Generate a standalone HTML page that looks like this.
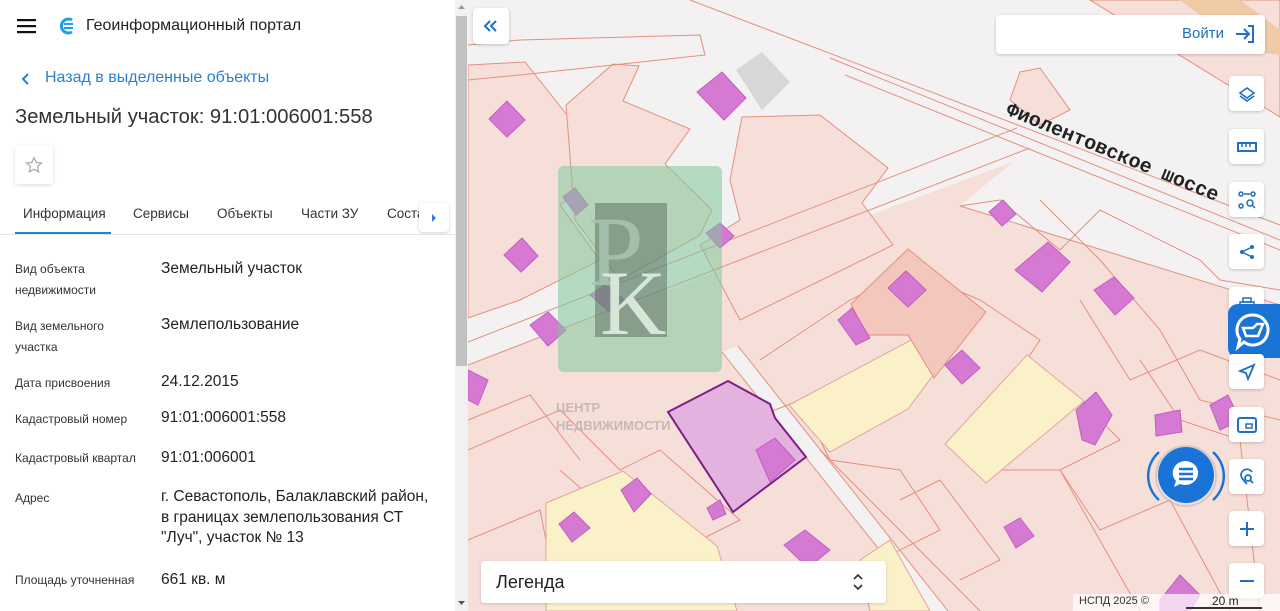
<!DOCTYPE html>
<html><head><meta charset="utf-8">
<style>
*{box-sizing:border-box;margin:0;padding:0}
body{width:1280px;height:611px;overflow:hidden;font-family:"Liberation Sans","DejaVu Sans",sans-serif;background:#fff;position:relative}
#left{position:absolute;left:0;top:0;width:455px;height:611px;background:#fff;color:#222}
#sb{position:absolute;left:455px;top:0;width:13px;height:611px;background:#f1f1f1}
#sb .th{position:absolute;left:1px;top:16px;width:11px;height:350px;background:#c1c1c1}
.lbl{position:absolute;left:15px;font-size:12px;color:#333;line-height:21px}
.val{position:absolute;left:161px;font-size:15.5px;color:#222;line-height:20.5px}
#map{position:absolute;left:468px;top:0;width:812px;height:611px;overflow:hidden;background:#f7dfd9}
.btn{position:absolute;left:1229px;width:35px;height:35px;background:#fff;border-radius:4px;box-shadow:0 1px 3px rgba(0,0,0,.2);display:flex;align-items:center;justify-content:center}
</style></head><body>
<div id="left">
  <svg style="position:absolute;left:17px;top:19px" width="19" height="15"><rect y="0" width="19" height="2.2" fill="#111"/><rect y="6" width="19" height="2.2" fill="#111"/><rect y="12" width="19" height="2.2" fill="#111"/></svg>
  <svg style="position:absolute;left:58px;top:17px" width="18" height="18" viewBox="0 0 18 18"><path d="M14 3A7 7 0 1 0 14 15" fill="none" stroke="#1ea0e8" stroke-width="3"/><rect x="6" y="6" width="9" height="2" fill="#1ea0e8"/><rect x="6" y="10" width="9" height="2" fill="#1ea0e8"/></svg>
  <div style="position:absolute;left:86px;top:17px;font-size:16px;color:#222">Геоинформационный портал</div>
  <svg style="position:absolute;left:21px;top:73px" width="10" height="12"><path d="M7 1L2 6l5 5" fill="none" stroke="#2a7fd0" stroke-width="2"/></svg>
  <div style="position:absolute;left:45px;top:69px;font-size:16px;color:#2a7fd0">Назад в выделенные объекты</div>
  <div style="position:absolute;left:15px;top:106px;font-size:20.2px;color:#333">Земельный участок: 91:01:006001:558</div>
  <div style="position:absolute;left:15px;top:146px;width:38px;height:38px;box-shadow:0 1px 4px rgba(0,0,0,.15);border-radius:3px"><svg style="margin:9px" width="20" height="20" viewBox="0 0 24 24"><path d="M12 3l2.7 6 6.3.6-4.8 4.3 1.4 6.3L12 17l-5.6 3.2 1.4-6.3L3 9.6 9.3 9z" fill="none" stroke="#aaa" stroke-width="1.5"/></svg></div>
  <div style="position:absolute;top:206px;font-size:13.5px;color:#333;left:23px">Информация</div>
  <div style="position:absolute;top:206px;font-size:13.5px;color:#333;left:133px">Сервисы</div>
  <div style="position:absolute;top:206px;font-size:13.5px;color:#333;left:217px">Объекты</div>
  <div style="position:absolute;top:206px;font-size:13.5px;color:#333;left:301px">Части ЗУ</div>
  <div style="position:absolute;top:206px;font-size:13.5px;color:#333;left:387px">Соста</div>
  <div style="position:absolute;left:419px;top:203px;width:30px;height:29px;background:#fff;border-radius:4px;box-shadow:0 1px 3px rgba(0,0,0,.2)"><svg style="position:absolute;left:11px;top:10px" width="8" height="10"><path d="M2 1l4 4-4 4z" fill="#2a7fd0"/></svg></div>
  <div style="position:absolute;left:15px;top:232px;width:96px;height:3px;background:#2a7fd0"></div>
  <div style="position:absolute;left:0;top:234px;width:455px;height:1px;background:#e4e4e4"></div>
  <div class="lbl" style="top:259px">Вид объекта<br>недвижимости</div><div class="val" style="top:259px">Земельный участок</div>
  <div class="lbl" style="top:316px">Вид земельного<br>участка</div><div class="val" style="top:315px">Землепользование</div>
  <div class="lbl" style="top:373px">Дата присвоения</div><div class="val" style="top:372px">24.12.2015</div>
  <div class="lbl" style="top:409px">Кадастровый номер</div><div class="val" style="top:408px">91:01:006001:558</div>
  <div class="lbl" style="top:448px">Кадастровый квартал</div><div class="val" style="top:448px">91:01:006001</div>
  <div class="lbl" style="top:488px">Адрес</div><div class="val" style="top:487px">г. Севастополь, Балаклавский район,<br>в границах землепользования СТ<br>"Луч", участок № 13</div>
  <div class="lbl" style="top:570px">Площадь уточненная</div><div class="val" style="top:570px">661 кв. м</div>
</div>
<div id="sb"><div class="th"></div><svg style="position:absolute;left:2px;top:4px" width="9" height="6"><path d="M1 5l3.5-4 3.5 4z" fill="#999"/></svg><svg style="position:absolute;left:2px;top:600px" width="9" height="6"><path d="M1 1l3.5 4 3.5-4z" fill="#555"/></svg></div>
<div id="map">
<svg width="812" height="611" viewBox="468 0 812 611" style="position:absolute;left:0;top:0">
 <!-- light road areas -->
 <g fill="#f3f1f1">
  <polygon points="468,0 700,0 840,58 1040,135 1045,150 468,365"/>
  <polygon points="690,0 1090,0 1280,117 1280,305 960,206 1040,140 830,60"/>
  <polygon points="722,352 738,346 948,611 928,611"/>
 </g>
 <!-- pink parcels over light area -->
 <g fill="#f7dfd9" stroke="#e2907f" stroke-width="1">
  <polygon points="468,65 525,62 575,125 610,170 560,205 600,260 520,300 468,318"/>
  <polygon points="566,105 613,64 639,66 623,101 690,129 665,164 712,210 700,235 620,280 575,220"/>
  <polygon points="742,117 820,115 888,168 862,203 893,245 740,320 700,245 740,220 730,180"/>
  <polygon points="1090,0 1280,0 1280,117"/>
  <polygon points="1020,72 1040,68 1070,110 1040,125 1010,100"/>
 </g>
 <polygon points="1180,0 1240,0 1280,30 1280,55 1245,50" fill="#f0c9a5"/>
 <g fill="none" stroke="#e2907f" stroke-width="1">
  <line x1="690" y1="0" x2="1280" y2="225"/>
  <line x1="830" y1="58" x2="1280" y2="240"/>
  <line x1="845" y1="75" x2="1280" y2="250"/>
  <line x1="960" y1="206" x2="1280" y2="305"/>
  <line x1="468" y1="342" x2="1017" y2="128"/>
  <line x1="468" y1="365" x2="1030" y2="148"/>
  <line x1="722" y1="352" x2="928" y2="611"/>
  <line x1="738" y1="346" x2="948" y2="611"/>
  <polyline points="468,45 520,40 700,35 705,55 520,75 468,80"/>
  <polyline points="468,450 560,410 620,470 660,450 740,520 660,560 620,611"/>
  <polyline points="750,420 800,400 830,460 900,470 940,530 860,570 870,611"/>
  <polyline points="760,360 850,300 910,270 980,300 1040,340 1000,400 1030,420 1080,400 1120,440 1060,470 1140,611"/>
  <polyline points="960,206 1000,200 1060,250 1100,210 1200,260 1220,280 1280,290"/>
  <polyline points="990,470 1060,470 1100,530 1170,500 1230,611"/>
  <polyline points="820,450 980,611"/><polyline points="560,470 640,540 700,611"/>
  <polyline points="1140,360 1180,420 1240,440 1260,611"/>
  <polyline points="468,540 540,510 560,611"/>
  <polyline points="900,500 940,480 1000,560 960,580"/>
  <polyline points="1040,200 1100,260 1160,330 1200,400 1280,420"/>
  <polyline points="1080,300 1130,380 1200,350 1280,380"/>
  <polyline points="468,420 530,395 580,460"/>
 </g>
 <g fill="#fbf1c9" stroke="#e2a59a">
  <polygon points="789,405 913,339 934,374 908,409 830,452"/>
  <polygon points="945,444 1027,355 1084,401 986,483"/>
  <polygon points="546,503 623,471 717,546 737,611 546,611"/>
  <polygon points="860,560 890,540 930,611 870,611"/>
 </g>
 <polygon points="851,304 908,249 986,312 934,378 908,335 867,335" fill="#f4c7bc" stroke="#e2907f"/>
 <polygon points="668,412 728,381 770,404 775,418 806,457 733,512" fill="#e4b2df" stroke="#7b1f86" stroke-width="2"/>
 <g fill="#d679d3" stroke="#c05fc0" stroke-width="1">
  <polygon points="697,92 722,72 746,98 724,120"/>
  <polygon points="489,119 507,101 525,120 507,137"/>
  <polygon points="504,255 522,238 538,256 521,272"/>
  <polygon points="530,325 548,312 566,330 548,346"/>
  <polygon points="706,233 720,223 734,236 720,248"/>
  <polygon points="888,288 906,271 926,290 908,307"/>
  <polygon points="945,365 962,350 980,368 962,384"/>
  <polygon points="989,212 1003,200 1016,214 1002,226"/>
  <polygon points="1015,270 1048,242 1070,262 1042,292"/>
  <polygon points="1094,290 1114,277 1134,298 1115,315"/>
  <polygon points="838,320 852,308 870,338 856,345"/>
  <polygon points="1076,410 1096,392 1112,415 1095,445 1082,440"/>
  <polygon points="1155,415 1180,410 1182,432 1156,436"/>
  <polygon points="1210,405 1228,395 1240,420 1220,430"/>
  <polygon points="756,450 775,438 795,460 770,482"/>
  <polygon points="621,490 637,478 651,494 634,512"/>
  <polygon points="559,524 574,512 590,528 572,542"/>
  <polygon points="707,508 720,500 726,514 713,520"/>
  <polygon points="784,545 805,530 830,550 808,568"/>
  <polygon points="1004,527 1020,518 1034,536 1016,548"/>
  <polygon points="1160,600 1180,575 1200,595 1190,611 1160,611"/>
  <polygon points="468,370 488,380 478,405 468,400"/>
  <polygon points="563,197 575,188 588,205 576,215"/>
  <polygon points="590,295 605,285 625,300 610,312"/>
 </g>
 <polygon points="736,70 762,52 790,82 762,110" fill="#d8d6d6"/>
 <text x="1005" y="114" transform="rotate(22.5 1005 114)" font-family="Liberation Mono,monospace" font-size="20" fill="#222" font-weight="bold">Фиолентовское шоссе</text>
 <rect x="558" y="166" width="164" height="206" rx="6" fill="#7fc99a" opacity="0.55"/>
 <rect x="595" y="203" width="72" height="134" fill="#4f5e55" opacity="0.45"/>
 <text x="588" y="285" font-family="Liberation Serif,serif" font-size="100" fill="#a8c4b0" opacity="0.85">P</text>
 <text x="600" y="334" font-family="Liberation Serif,serif" font-size="92" fill="#dfeee2" opacity="0.9">K</text>
 <text x="556" y="412" font-family="Liberation Sans,sans-serif" font-size="13" fill="#c8b8b8" font-weight="bold">ЦЕНТР</text>
 <text x="556" y="430" font-family="Liberation Sans,sans-serif" font-size="13" fill="#c8b8b8" font-weight="bold">НЕДВИЖИМОСТИ</text>
</svg>
</div>
<div style="position:absolute;left:473px;top:8px;width:36px;height:36px;background:#fff;border-radius:4px;box-shadow:0 1px 3px rgba(0,0,0,.2)"><svg style="position:absolute;left:10px;top:11px" width="16" height="14"><path d="M7 2L2 7l5 5M13 2L8 7l5 5" fill="none" stroke="#1f6fc4" stroke-width="2"/></svg></div>
<div style="position:absolute;left:996px;top:15px;width:269px;height:39px;background:#fff;border-radius:4px;box-shadow:0 1px 3px rgba(0,0,0,.2)"><span style="position:absolute;left:186px;top:10px;font-size:15px;color:#1f6fc4">Войти</span><svg style="position:absolute;left:238px;top:9px" width="22" height="20"><path d="M2 10h12M10 5l5 5-5 5M14 2h5v16h-5" fill="none" stroke="#1f6fc4" stroke-width="2"/></svg></div>
<div class="btn" style="top:76px"><svg width="18" height="18"><path d="M9 3l7 5-7 5-7-5z" fill="none" stroke="#1f6fc4" stroke-width="1.6"/><path d="M2 11l7 5 7-5" fill="none" stroke="#1f6fc4" stroke-width="1.6"/></svg></div>
<div class="btn" style="top:129px"><svg width="20" height="12"><rect x="1" y="2" width="18" height="8" fill="none" stroke="#1f6fc4" stroke-width="2"/><path d="M5 2v4M9 2v4M13 2v4" stroke="#1f6fc4" stroke-width="1.5"/></svg></div>
<div class="btn" style="top:182px"><svg width="20" height="20"><circle cx="4" cy="4" r="2" fill="none" stroke="#1f6fc4" stroke-width="1.5"/><circle cx="16" cy="4" r="2" fill="none" stroke="#1f6fc4" stroke-width="1.5"/><circle cx="4" cy="16" r="2" fill="none" stroke="#1f6fc4" stroke-width="1.5"/><circle cx="13" cy="13" r="3" fill="none" stroke="#1f6fc4" stroke-width="1.5"/><path d="M15 15l3 3M7 4h6" stroke="#1f6fc4" stroke-width="1.5"/></svg></div>
<div class="btn" style="top:234px"><svg width="18" height="18"><circle cx="14" cy="4" r="2" fill="#1f6fc4"/><circle cx="4" cy="9" r="2" fill="#1f6fc4"/><circle cx="14" cy="14" r="2" fill="#1f6fc4"/><path d="M14 4L4 9l10 5" fill="none" stroke="#1f6fc4" stroke-width="1.5"/></svg></div>
<div class="btn" style="top:287px"><svg width="18" height="18"><rect x="5" y="2" width="8" height="4" fill="none" stroke="#1f6fc4" stroke-width="1.5"/><rect x="2" y="6" width="14" height="7" fill="none" stroke="#1f6fc4" stroke-width="1.5"/></svg></div>
<div style="position:absolute;left:1228px;top:304px;width:56px;height:54px;background:#1a73d6;border-radius:10px 0 0 10px"><svg style="position:absolute;left:5px;top:7px" width="40" height="40" viewBox="0 0 40 40"><path d="M20 4a15 15 0 1 1-9 27l-6 5 2-8A15 15 0 0 1 20 4z" fill="none" stroke="#fff" stroke-width="3"/><path d="M10 17h10l4-4h6l-5 12H13z" fill="none" stroke="#fff" stroke-width="2.5"/></svg></div>
<div class="btn" style="top:354px"><svg width="18" height="18"><path d="M16 2L2 8l6 2 2 6z" fill="none" stroke="#1f6fc4" stroke-width="1.8"/></svg></div>
<div class="btn" style="top:407px"><svg width="20" height="16"><rect x="1" y="1" width="18" height="14" rx="2" fill="none" stroke="#1f6fc4" stroke-width="2"/><rect x="9" y="7" width="6" height="4" fill="none" stroke="#1f6fc4" stroke-width="1.5"/></svg></div>
<div class="btn" style="top:459px"><svg width="18" height="18"><path d="M9 16C4 11 3 8 3 7a6 6 0 0 1 11-3" fill="none" stroke="#1f6fc4" stroke-width="1.8"/><circle cx="10" cy="10" r="3" fill="none" stroke="#1f6fc4" stroke-width="1.8"/><path d="M12 12l3 3" stroke="#1f6fc4" stroke-width="1.8"/></svg></div>
<div class="btn" style="top:511px"><svg width="16" height="16"><path d="M8 1v14M1 8h14" stroke="#1f6fc4" stroke-width="2"/></svg></div>
<div class="btn" style="top:563px"><svg width="16" height="16"><path d="M1 8h14" stroke="#1f6fc4" stroke-width="2"/></svg></div>
<svg style="position:absolute;left:1145px;top:440px" width="82" height="72"><path d="M14 12a32 32 0 0 0 0 48M68 12a32 32 0 0 1 0 48" fill="none" stroke="#1a73d6" stroke-width="2.5"/><circle cx="41" cy="36" r="30" fill="none" stroke="#bbb" stroke-width="2" opacity=".6"/><circle cx="41" cy="35" r="28" fill="#1a73d6"/><path d="M41 21a13 12 0 1 1-6 23l-6 3 2-6a13 12 0 0 1 10-20z" fill="#fff"/><path d="M34 29h14M34 34h14M34 39h14" stroke="#1a73d6" stroke-width="2.5"/></svg>
<div style="position:absolute;left:481px;top:561px;width:405px;height:42px;background:#fff;border-radius:3px;box-shadow:0 1px 3px rgba(0,0,0,.15)"><span style="position:absolute;left:15px;top:11px;font-size:18px;color:#222">Легенда</span><svg style="position:absolute;left:372px;top:12px" width="10" height="18"><path d="M1 6l4-4 4 4M1 12l4 4 4-4" fill="none" stroke="#333" stroke-width="1.6"/></svg></div>
<div style="position:absolute;left:1073px;top:594px;width:207px;height:17px;background:rgba(255,255,255,.7)"><span style="position:absolute;left:6px;top:1px;font-size:11px;color:#333">НСПД 2025 ©</span><span style="position:absolute;left:139px;top:0;font-size:12px;color:#222">20 m</span><div style="position:absolute;left:113px;top:13px;width:76px;height:2px;background:#333"></div></div>
</body></html>
